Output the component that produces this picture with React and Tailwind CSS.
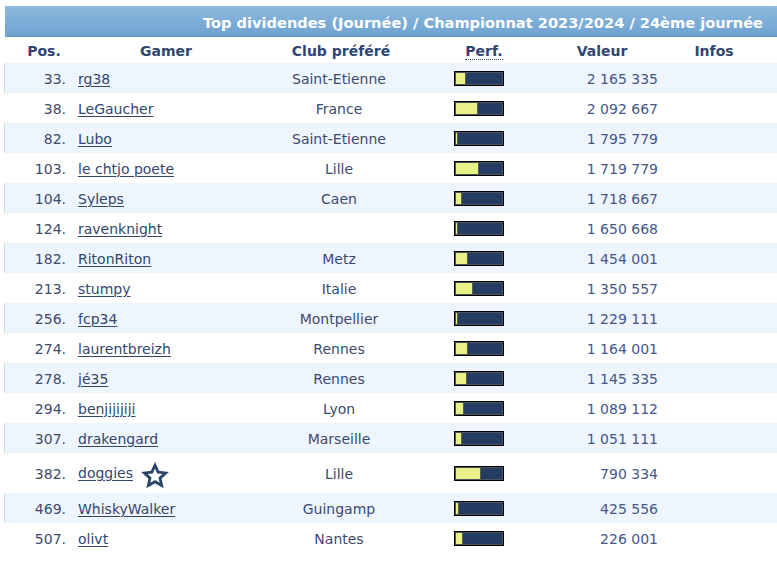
const rows = [
  { pos: 33, name: 'rg38', club: 'Saint-Etienne', perf: 10, val: '2 165 335' },
  { pos: 38, name: 'LeGaucher', club: 'France', perf: 22, val: '2 092 667' },
  { pos: 82, name: 'Lubo', club: 'Saint-Etienne', perf: 2, val: '1 795 779' },
  { pos: 103, name: 'le chtjo poete', club: 'Lille', perf: 23, val: '1 719 779' },
  { pos: 104, name: 'Syleps', club: 'Caen', perf: 6, val: '1 718 667' },
  { pos: 124, name: 'ravenknight', club: '', perf: 2, val: '1 650 668' },
  { pos: 182, name: 'RitonRiton', club: 'Metz', perf: 12, val: '1 454 001' },
  { pos: 213, name: 'stumpy', club: 'Italie', perf: 17, val: '1 350 557' },
  { pos: 256, name: 'fcp34', club: 'Montpellier', perf: 2, val: '1 229 111' },
  { pos: 274, name: 'laurentbreizh', club: 'Rennes', perf: 12, val: '1 164 001' },
  { pos: 278, name: 'jé35', club: 'Rennes', perf: 11, val: '1 145 335' },
  { pos: 294, name: 'benjijijiji', club: 'Lyon', perf: 8, val: '1 089 112' },
  { pos: 307, name: 'drakengard', club: 'Marseille', perf: 6, val: '1 051 111' },
  { pos: 382, name: 'doggies', club: 'Lille', perf: 25, val: '790 334', star: true },
  { pos: 469, name: 'WhiskyWalker', club: 'Guingamp', perf: 3, val: '425 556' },
  { pos: 507, name: 'olivt', club: 'Nantes', perf: 7, val: '226 001' },
];

function PerfBar({ value }) {
  return (
    <div className="w-[50px] h-[15px] border border-black bg-[#4d525c] p-[1px]">
      <div className="h-full bg-[#243c62] flex">
        <div className="h-full bg-[#e9f08a] border-r border-[#5a5f4a]" style={{ width: value }} />
      </div>
    </div>
  );
}

function Star() {
  return (
    <svg width="28" height="28" viewBox="0 0 24 24" className="ml-[8px] mt-[5px]">
      <path
        d="M12 2.8l2.7 5.9 6.4.7-4.8 4.4 1.4 6.3L12 16.9l-5.7 3.2 1.4-6.3-4.8-4.4 6.4-.7z"
        fill="none"
        stroke="#2c4466"
        strokeWidth="2.4"
        strokeLinejoin="miter"
      />
    </svg>
  );
}

export default function App() {
  return (
    <div className="w-[777px] h-[562px] overflow-hidden bg-white pt-[6px] text-[14px] text-[#3c4b6d]" style={{ fontFamily: '"DejaVu Sans", Verdana, sans-serif' }}>
      <div className="ml-[5px] h-[31px] bg-gradient-to-b from-[#8dbadf] to-[#6ea2cf] border-b border-[#5e93c4] flex items-center justify-end pr-[14px] pt-[3px]">
        <span className="text-white font-bold text-[14.6px]">Top dividendes (Journée) / Championnat 2023/2024 / 24ème journée</span>
      </div>
      <div className="ml-[4px] h-[26px] flex items-center font-bold text-[#2f4672] text-[14px] pt-[2px]">
        <div className="w-[80px] text-center">Pos.</div>
        <div className="w-[164px] text-center">Gamer</div>
        <div className="w-[186px] text-center">Club préféré</div>
        <div className="w-[100px] flex justify-center">
          <span className="border-b border-dotted border-[#2f4672] leading-[16px]">Perf.</span>
        </div>
        <div className="w-[136px] text-center">Valeur</div>
        <div className="w-[88px] text-center">Infos</div>
      </div>
      {rows.map((r, i) => (
        <div
          key={r.pos}
          className={
            'ml-[4px] flex items-center ' +
            (r.star ? 'h-[40px] ' : 'h-[30px] ') +
            (i % 2 === 0 ? 'bg-[#eef5fd] border-l border-[#c3d8ee]' : 'bg-white border-l border-white')
          }
        >
          <div className="w-[65px] text-right pr-[4px] pt-[2px]">{r.pos}.</div>
          <div className="w-[189px] pl-[8px] flex items-center">
            <a href="#" className={'underline text-[#34466c] decoration-[1px] underline-offset-[2px] ' + (r.star ? '' : 'pt-[2px]')}>{r.name}</a>
            {r.star && <Star />}
          </div>
          <div className="w-[160px] text-center pt-[2px]">{r.club}</div>
          <div className="w-[35px]" />
          <PerfBar value={r.perf} />
          <div className="w-[154px] text-right text-[#45588a] pt-[2px]">{r.val}</div>
        </div>
      ))}
    </div>
  );
}
